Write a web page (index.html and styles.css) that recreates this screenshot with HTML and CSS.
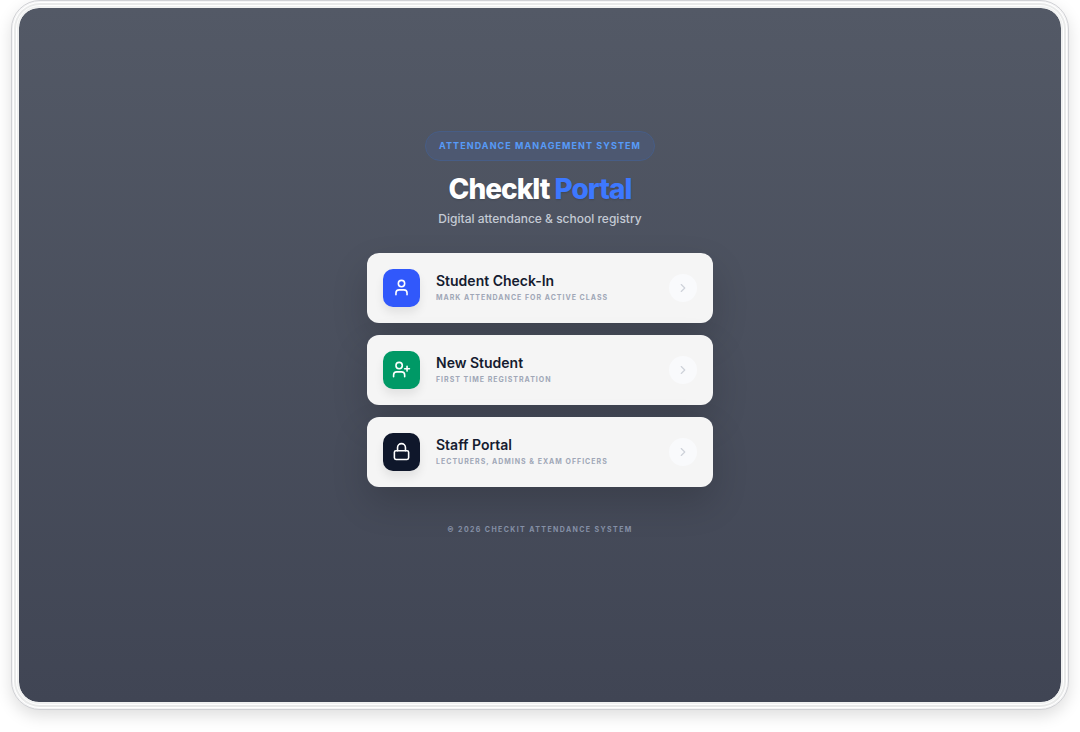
FILE: index.html
```
<!DOCTYPE html>
<html lang="en">
<head>
  <meta charset="UTF-8" />
  <meta name="viewport" content="width=device-width, initial-scale=1.0" />
  <title>CheckIt Portal</title>
  <link rel="stylesheet" href="styles.css">
</head>
<body>
  <div class="frame">
    <div class="screen">
      <header class="header">
        <span class="badge">Attendance Management System</span>
        <h1>CheckIt <span class="accent">Portal</span></h1>
        <p>Digital attendance &amp; school registry</p>
      </header>

      <main class="menu">
        <a class="card" href="#checkin">
          <span class="icon blue">
            <svg viewBox="0 0 24 24"><circle cx="12" cy="7" r="4"/><path d="M19 21v-2a4 4 0 0 0-4-4H9a4 4 0 0 0-4 4v2"/></svg>
          </span>
          <span class="text">
            <span class="name">Student Check-In</span>
            <span class="note">Mark attendance for active class</span>
          </span>
          <span class="arrow"><svg viewBox="0 0 24 24"><path d="m9 18 6-6-6-6"/></svg></span>
        </a>

        <a class="card" href="#register">
          <span class="icon green">
            <svg viewBox="0 0 24 24"><circle cx="9" cy="7" r="4"/><path d="M16 21v-2a4 4 0 0 0-4-4H6a4 4 0 0 0-4 4v2M19 8v6M22 11h-6"/></svg>
          </span>
          <span class="text">
            <span class="name">New Student</span>
            <span class="note">First time registration</span>
          </span>
          <span class="arrow"><svg viewBox="0 0 24 24"><path d="m9 18 6-6-6-6"/></svg></span>
        </a>

        <a class="card" href="#staff">
          <span class="icon dark">
            <svg viewBox="0 0 24 24"><rect x="3" y="11" width="18" height="11" rx="2"/><path d="M7 11V7a5 5 0 0 1 10 0v4"/></svg>
          </span>
          <span class="text">
            <span class="name">Staff Portal</span>
            <span class="note">Lecturers, admins &amp; exam officers</span>
          </span>
          <span class="arrow"><svg viewBox="0 0 24 24"><path d="m9 18 6-6-6-6"/></svg></span>
        </a>
      </main>

      <footer>© 2026 CheckIt Attendance System</footer>
    </div>
  </div>
</body>
</html>
```
FILE: styles.css
```
* {
  box-sizing: border-box;
}
body {
  margin: 0;
  padding: 0 11px 22px;
  min-height: 100vh;
  display: flex;
  background: #fff;
  font-family: 'Inter', sans-serif;
}

/* window frame */
.frame {
  flex: 1;
  display: flex;
  padding: 5px;
  border: 1px solid #d0d1d5;
  border-radius: 29px;
  background: #fff;
  box-shadow: inset 0 0 0 1px #f4f4f5, inset 0 0 0 2px #fff, inset 0 0 0 4px #e9eaea, 0 6px 16px rgba(0,0,0,0.13);
}
.screen {
  flex: 1;
  display: flex;
  flex-direction: column;
  align-items: center;
  justify-content: center;
  padding: 24px 16px 68px;
  border: 2px solid #f0f1f1;
  border-radius: 22px;
  background: linear-gradient(#535966, #404554) padding-box;
}

.header {
  display: flex;
  flex-direction: column;
  align-items: center;
  margin-bottom: 24px;
  text-align: center;
}
.badge {
  padding: 8px 13px;
  border: 1px solid #475d86;
  border-radius: 15px;
  background: #4d5871;
  color: #579bf8;
  font-size: 9px;
  line-height: 12px;
  font-weight: 700;
  letter-spacing: 0.12em;
  text-transform: uppercase;
}
h1 {
  margin: 12px 0 4px;
  color: #fff;
  font-size: 28px;
  line-height: 32px;
  font-weight: 800;
  letter-spacing: -1px;
  text-shadow: 0 1px 2px rgba(0,0,0,0.15);
}
.accent {
  color: #3d78ff;
}
.header p {
  margin: 0;
  color: #c4cad4;
  font-size: 12px;
  line-height: 20px;
  font-weight: 500;
}

.menu {
  display: flex;
  flex-direction: column;
  gap: 12px;
  width: 100%;
  max-width: 346px;
}
.card {
  display: flex;
  align-items: center;
  gap: 16px;
  padding: 16px;
  border-radius: 12px;
  background: #f5f5f5;
  color: #151c30;
  text-decoration: none;
  box-shadow: 0 16px 36px rgba(0,0,0,0.16);
}
.icon {
  display: flex;
  align-items: center;
  justify-content: center;
  width: 37px;
  height: 38px;
  border-radius: 10px;
  box-shadow: 0 6px 10px rgba(0,0,0,0.08);
}
svg {
  fill: none;
  stroke: currentColor;
  stroke-width: 2;
  stroke-linecap: round;
  stroke-linejoin: round;
}
.icon svg {
  width: 19px;
  height: 19px;
  color: #fff;
}
.blue { background: #3158fb; }
.green { background: #009966; }
.dark { background: #0f172b; }
.text {
  flex: 1;
  display: flex;
  flex-direction: column;
}
.name {
  font-size: 14px;
  line-height: 20px;
  font-weight: 600;
}
.note {
  color: #a0a7b7;
  font-size: 7px;
  line-height: 14px;
  font-weight: 700;
  letter-spacing: 1px;
  text-transform: uppercase;
}
.arrow {
  display: flex;
  align-items: center;
  justify-content: center;
  width: 28px;
  height: 28px;
  border-radius: 50%;
  background: #f9fafc;
  color: #ced2da;
}
.arrow svg {
  width: 14px;
  height: 14px;
}
footer {
  margin-top: 37px;
  color: #8590a6;
  font-size: 7px;
  line-height: 12px;
  font-weight: 700;
  letter-spacing: 0.2em;
  text-transform: uppercase;
}
```
